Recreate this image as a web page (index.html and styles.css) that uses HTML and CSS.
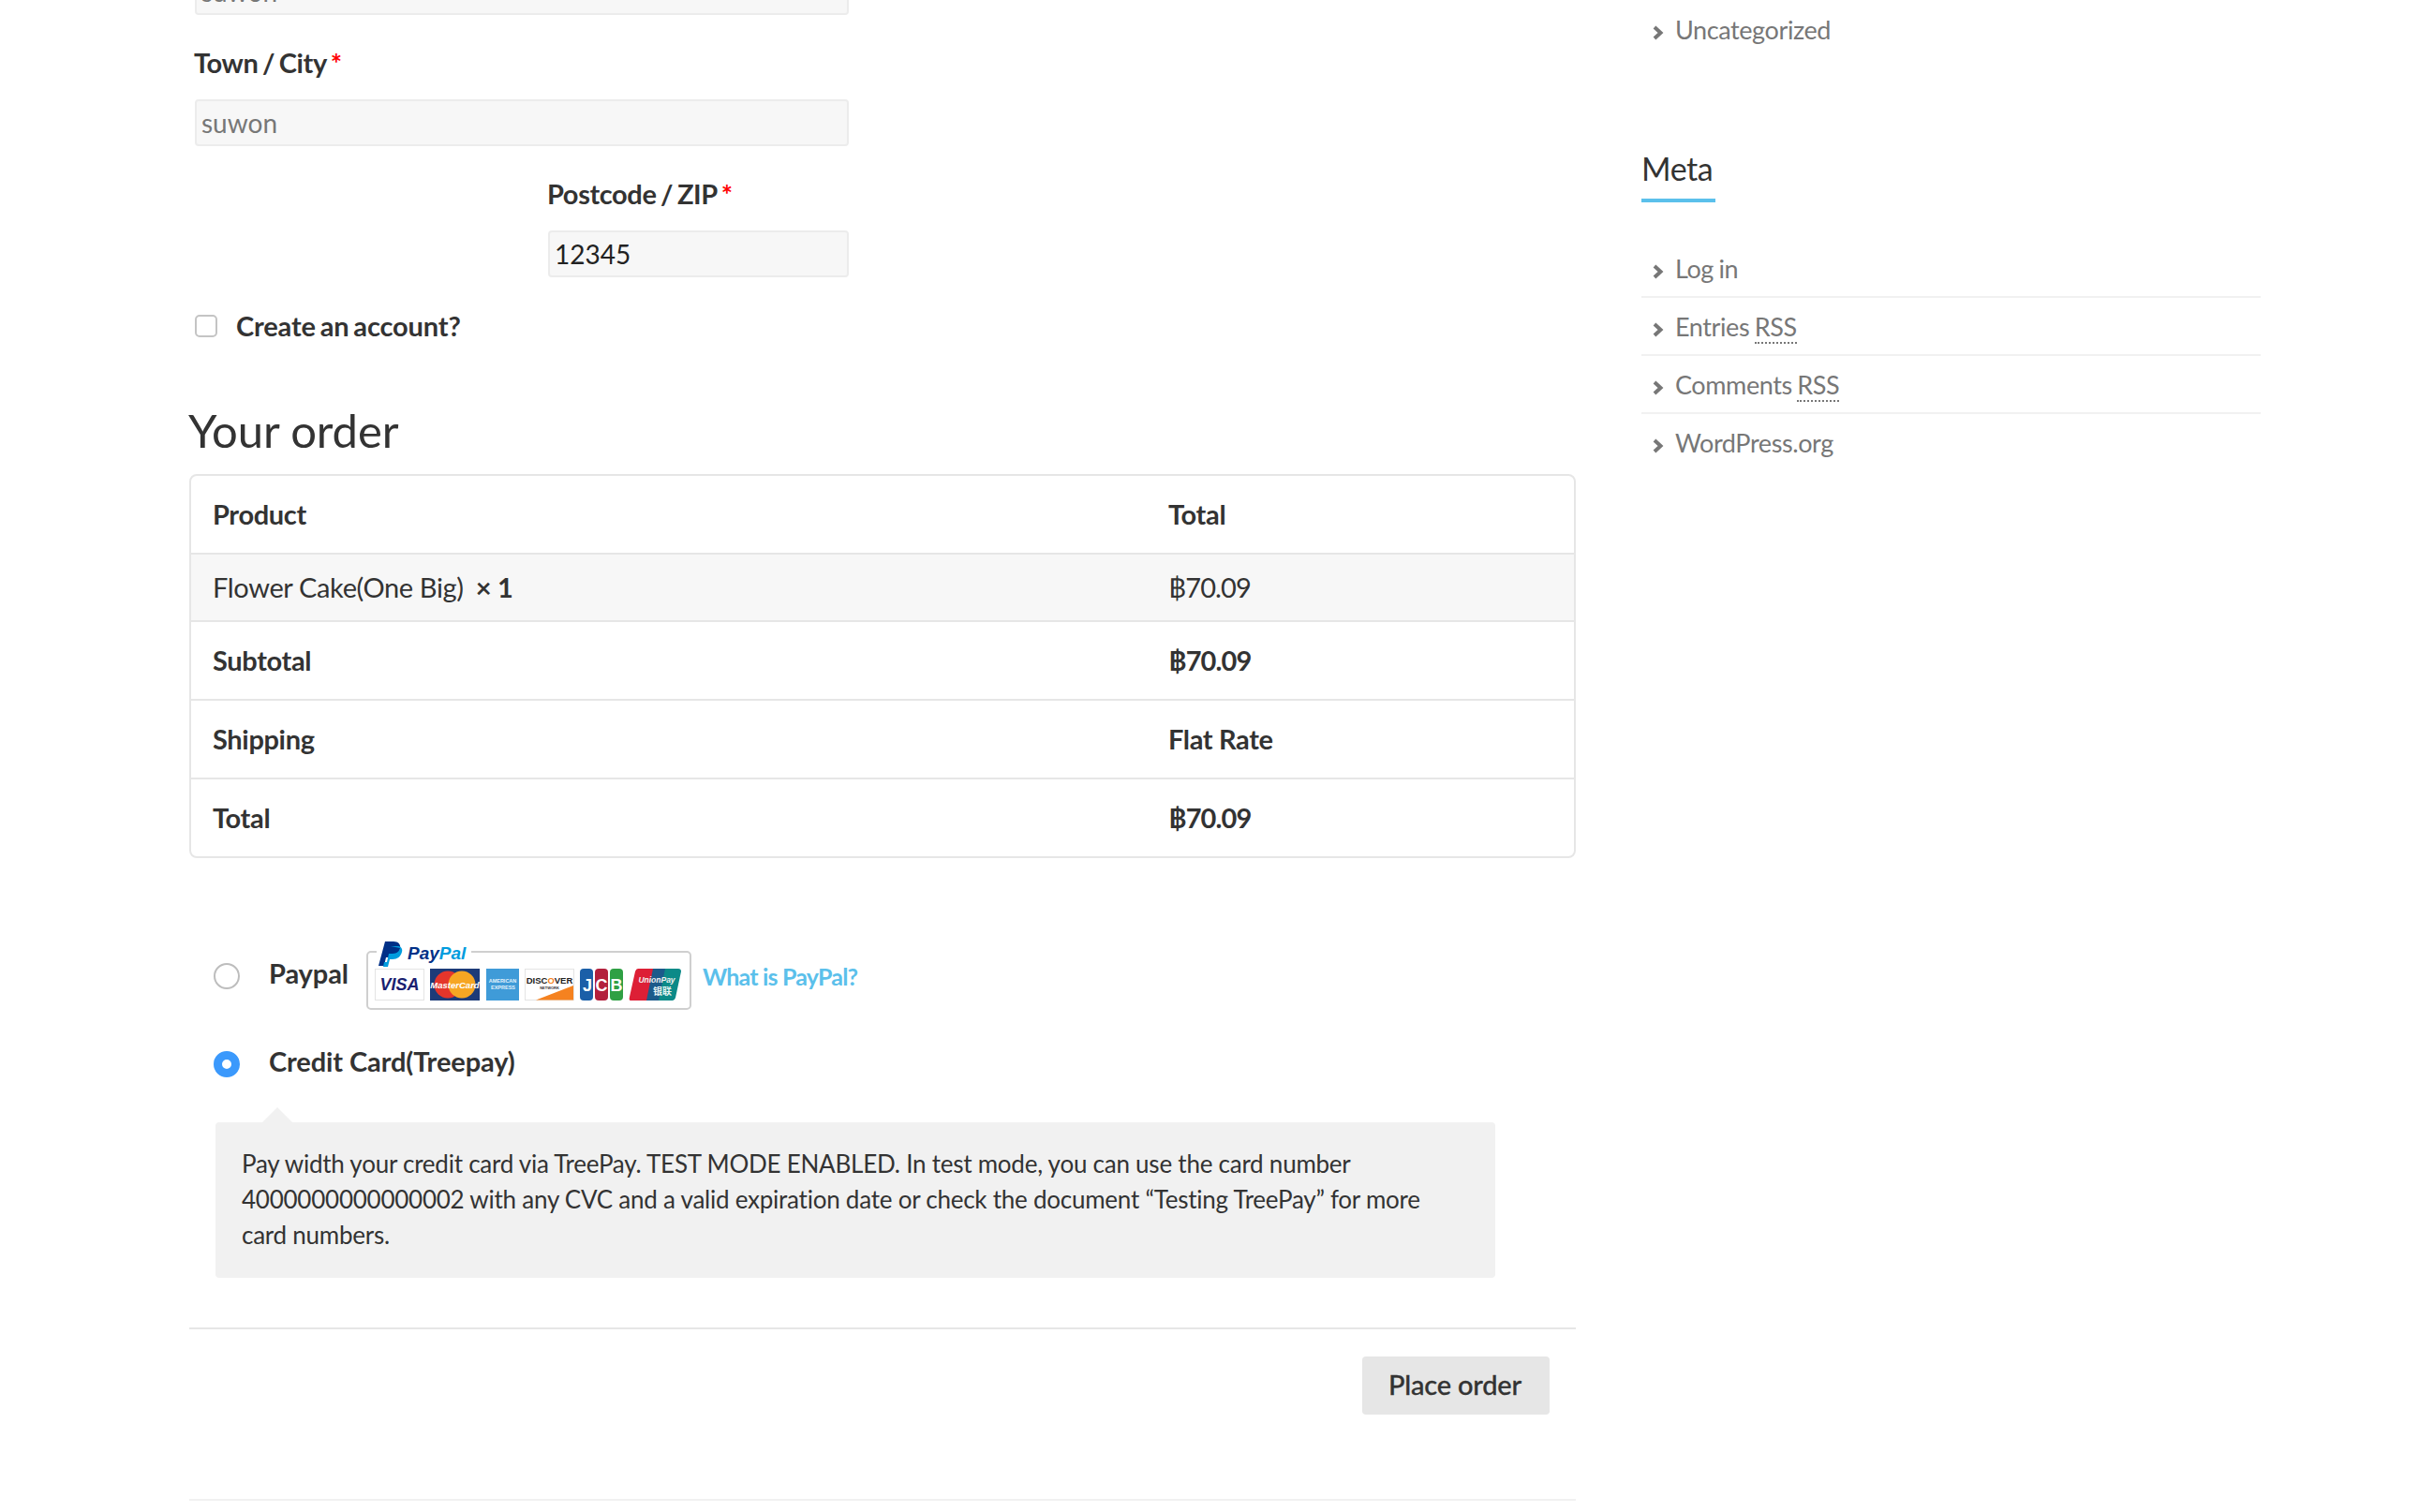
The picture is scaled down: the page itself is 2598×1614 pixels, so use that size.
FILE: index.html
```html
<!DOCTYPE html>
<html lang="en">
<head>
<meta charset="utf-8">
<title>Checkout</title>
<link rel="stylesheet" href="styles.css">
</head>
<body>
<div class="page">
  <main class="main">
    <div class="fields">
      <input class="input muted" type="text" value="suwon">
      <div class="field">
        <label class="label">Town / City <span class="req">*</span></label>
        <input class="input muted" type="text" value="suwon">
      </div>
      <div class="field field-half">
        <label class="label">Postcode / ZIP <span class="req">*</span></label>
        <input class="input" type="text" value="12345">
      </div>
      <label class="account"><input class="check" type="checkbox"><span>Create an account?</span></label>
    </div>

    <h2 class="order-title">Your order</h2>
    <table class="order">
      <thead>
        <tr><th class="col-a">Product</th><th>Total</th></tr>
      </thead>
      <tbody>
        <tr class="item"><td>Flower Cake(One Big) <strong class="qty">× 1</strong></td><td class="price">฿70.09</td></tr>
      </tbody>
      <tfoot>
        <tr><th>Subtotal</th><th class="price">฿70.09</th></tr>
        <tr><th>Shipping</th><th>Flat Rate</th></tr>
        <tr><th>Total</th><th class="price">฿70.09</th></tr>
      </tfoot>
    </table>

    <div class="pay-row pay-row-paypal">
      <input class="radio" type="radio" name="pay">
      <label class="pay-label">Paypal</label>
      <svg class="badge" width="348" height="74" viewBox="0 0 348 74">
        <path d="M112 11H342a4 4 0 0 1 4 4V68a4 4 0 0 1-4 4H5a4 4 0 0 1-4-4V15a4 4 0 0 1 4-4H11" fill="none" stroke="#cfcfcf" stroke-width="2"/>
        <path d="M20 0h9c6 0 8 4 7 8-1 6-6 9-11 9h-4l-2 9h-6z" fill="#003087"/>
        <path d="M26 5h7c4 0 6 3 5 6-1 5-5 8-10 8h-3l-2 8h-5l1-5h3l2-9h4c4 0 7-2 8-6z" fill="#009cde"/>
        <text class="pp" x="44" y="19"><tspan fill="#003087">Pay</tspan><tspan fill="#009cde">Pal</tspan></text>

        <rect x="9.5" y="29.5" width="52" height="33" fill="#fff" stroke="#e4e4e4"/>
        <text class="visa" x="35.5" y="52" text-anchor="middle">VISA</text>

        <rect x="68" y="29" width="53" height="34" fill="#1d3b78"/>
        <circle cx="87" cy="46" r="14.5" fill="#e4352b"/>
        <circle cx="102" cy="46" r="14.5" fill="#f6a623"/>
        <text class="mc" x="94.5" y="49.5" text-anchor="middle">MasterCard</text>

        <rect x="128" y="29" width="35" height="34" fill="#3f9bd8"/>
        <text class="amex" x="145.5" y="44" text-anchor="middle">AMERICAN</text>
        <text class="amex" x="146" y="51" text-anchor="middle">EXPRESS</text>

        <rect x="169.5" y="29.5" width="52" height="33" fill="#fff" stroke="#e4e4e4"/>
        <path d="M181 62.5L221 47V62.5Z" fill="#f58220"/>
        <text class="disc" x="195.5" y="45" text-anchor="middle">DISC<tspan fill="#f58220">O</tspan>VER</text>
        <text class="net" x="195.5" y="50.5" text-anchor="middle">NETWORK</text>

        <rect x="228" y="29" width="14" height="34" rx="4" fill="#1b5fa8"/>
        <rect x="244" y="29" width="14" height="34" rx="4" fill="#b3203c"/>
        <rect x="260" y="29" width="14" height="34" rx="4" fill="#2fa044"/>
        <text class="jcb" x="236" y="53" text-anchor="middle">J</text>
        <text class="jcb" x="251" y="53" text-anchor="middle">C</text>
        <text class="jcb" x="267" y="53" text-anchor="middle">B</text>

        <path d="M290 29h18l-7 34h-19q-2 0-1-4l6-27q1-3 3-3z" fill="#dd1f36"/>
        <path d="M306 29h16l-7 34h-16z" fill="#1c5a8a"/>
        <path d="M319 29h14q3 0 3 3l-6 28q-1 3-3 3h-15z" fill="#0c8a88"/>
        <text class="up" x="310" y="44" text-anchor="middle">UnionPay</text>
        <text class="upz" x="316" y="57" text-anchor="middle">银联</text>
      </svg>
      <a class="what" href="#">What is PayPal?</a>
    </div>

    <div class="pay-row pay-row-card">
      <input class="radio" type="radio" name="pay" checked>
      <label class="pay-label">Credit Card(Treepay)</label>
    </div>

    <div class="pay-box">Pay width your credit card via TreePay. TEST MODE ENABLED. In test mode, you can use the card number<br>4000000000000002 with any CVC and a valid expiration date or check the document “Testing TreePay” for more<br>card numbers.</div>

    <div class="place">
      <button class="place-btn" type="button">Place order</button>
    </div>
  </main>

  <aside class="side">
    <ul class="list list-first">
      <li><svg class="chev" width="14" height="18" viewBox="0 0 14 18"><path d="M3 3L9.5 9L3 15"/></svg><a href="#">Uncategorized</a></li>
    </ul>
    <h3 class="side-title"><span>Meta</span></h3>
    <ul class="list">
      <li><svg class="chev" width="14" height="18" viewBox="0 0 14 18"><path d="M3 3L9.5 9L3 15"/></svg><a href="#">Log in</a></li>
      <li><svg class="chev" width="14" height="18" viewBox="0 0 14 18"><path d="M3 3L9.5 9L3 15"/></svg><a href="#">Entries <abbr>RSS</abbr></a></li>
      <li><svg class="chev" width="14" height="18" viewBox="0 0 14 18"><path d="M3 3L9.5 9L3 15"/></svg><a href="#">Comments <abbr>RSS</abbr></a></li>
      <li><svg class="chev" width="14" height="18" viewBox="0 0 14 18"><path d="M3 3L9.5 9L3 15"/></svg><a href="#">WordPress.org</a></li>
    </ul>
  </aside>
</div>
</body>
</html>
```

FILE: styles.css
```css
html, body { margin: 0; padding: 0; height: 1614px; overflow: hidden; background: #fff; }
body { font-family: Lato, "Noto Sans", sans-serif; font-size: 29px; color: #333; }

.page {
  display: grid;
  grid-template-columns: 1480px 661px;
  column-gap: 70px;
  padding-left: 202px;
  align-items: start;
}

.main { margin-top: -34px; }

.fields { padding-left: 6px; width: 698px; }
.field { margin-top: 31px; }
.field-half { margin-left: 377px; }
.label { display: block; font-weight: 700; line-height: 40px; margin: 0 0 19px -1px; letter-spacing: -0.4px; word-spacing: -2px; }
.req { color: #f00; }

.input {
  display: block;
  box-sizing: border-box;
  width: 100%;
  height: 50px;
  padding: 0 5px;
  border: 2px solid #ececec;
  border-radius: 4px;
  background: #f7f7f7;
  font: 28px Lato, sans-serif;
  color: #222;
  outline: none;
}
.muted { color: #777; }

.account { display: flex; align-items: center; gap: 20px; height: 40px; margin-top: 31px; font-weight: 700; letter-spacing: -0.15px; word-spacing: -2px; }
.check {
  appearance: none;
  box-sizing: border-box;
  width: 24px;
  height: 24px;
  margin: 2px 0 0;
  background: #fff;
  border: 2px solid #c4c4c4;
  border-radius: 5px;
}

.order-title { margin: 62px 0 17px -1px; font-size: 49px; line-height: 60px; font-weight: 400; letter-spacing: -0.1px; color: #333; }

.order {
  width: 1480px;
  box-sizing: border-box;
  table-layout: fixed;
  border-collapse: separate;
  border-spacing: 0;
  border: 2px solid #e6e6e6;
  border-radius: 8px;
}
.order th, .order td { padding: 0 23px 2px; text-align: left; letter-spacing: -0.35px; }
.order th { font-weight: 700; }
.order td { font-weight: 400; }
.order th.col-a { width: 974px; }
.order thead th { height: 80px; }
.order tbody td { height: 68px; background: #f7f7f7; border-top: 2px solid #e6e6e6; }
.order tfoot th { height: 80px; border-top: 2px solid #e6e6e6; }
.order .price { letter-spacing: -0.9px; }
.qty { margin-left: 6px; }

.pay-row { display: flex; align-items: center; padding-left: 26px; }
.pay-row-paypal { height: 80px; margin-top: 86px; }
.pay-row-card { height: 40px; margin-top: 34px; }
.radio {
  appearance: none;
  box-sizing: border-box;
  flex: none;
  width: 28px;
  height: 28px;
  margin: 0 31px 0 0;
  background: #fff;
  border: 2px solid #bdbdbd;
  border-radius: 50%;
}
.radio:checked { background: #fff; border: 9px solid #3b99fc; }
.pay-label { font-weight: 700; margin-bottom: 8px; letter-spacing: -0.1px; }
.badge { flex: none; margin-left: 19px; }
.what { margin-left: 11px; font-size: 25px; font-weight: 700; color: #5bc0eb; text-decoration: none; letter-spacing: -0.8px; }

.pp { font: italic 700 19px "Liberation Sans", sans-serif; }
.visa { font: italic 900 18px "Liberation Sans", sans-serif; fill: #1a1f71; }
.mc { font: italic 700 9.5px "Liberation Sans", sans-serif; fill: #fff; }
.amex { font: 700 5.5px "Liberation Sans", sans-serif; fill: #e4f2fb; }
.disc { font: 700 9.5px "Liberation Sans", sans-serif; fill: #222; }
.net { font: 700 4px "Liberation Sans", sans-serif; fill: #333; }
.jcb { font: 700 18px "Liberation Sans", sans-serif; fill: #fff; }
.up { font: italic 700 8.5px "Liberation Sans", sans-serif; fill: #f1f1f1; }
.upz { font: 700 10px "Noto Sans CJK SC", sans-serif; fill: #e8f4f4; }

.pay-box {
  position: relative;
  box-sizing: border-box;
  width: 1366px;
  height: 166px;
  margin: 42px 0 0 28px;
  padding: 25px 28px 0;
  background: #f1f1f1;
  border-radius: 4px;
  font-size: 26px;
  line-height: 38px;
  color: #333;
  letter-spacing: -0.24px;
  white-space: nowrap;
}
.pay-box::before {
  content: "";
  position: absolute;
  left: 50px;
  top: -16px;
  border-left: 16px solid transparent;
  border-right: 16px solid transparent;
  border-bottom: 16px solid #f1f1f1;
}

.place {
  display: flex;
  justify-content: flex-end;
  margin-top: 53px;
  padding: 29px 28px 90px 0;
  border-top: 2px solid #e6e6e6;
  border-bottom: 2px solid #f1f1f1;
}
.place-btn {
  box-sizing: border-box;
  width: 200px;
  height: 62px;
  padding: 0 2px 3px 0;
  border: 0;
  border-radius: 4px;
  background: #e6e6e6;
  font: 500 29px Lato, sans-serif;
  -webkit-text-stroke: 0.3px #333;
  color: #333;
  letter-spacing: -0.2px;
}

.side { padding-top: 1px; }
.side-title { margin: 97px 0 40px; font-size: 34px; line-height: 44px; font-weight: 400; color: #333; letter-spacing: -0.4px; }
.side-title span { display: inline-block; padding: 0 3px 10px 0; border-bottom: 4px solid #5bc0eb; }

.list { list-style: none; margin: 0; padding: 0; font-size: 27px; }
.list li { display: flex; align-items: center; height: 60px; padding-left: 11px; border-bottom: 2px solid #f1f1f1; }
.list li:last-child { border-bottom: 0; }
.list a { color: #777; text-decoration: none; letter-spacing: -0.4px; word-spacing: -1px; }
.list abbr { border-bottom: 2px dotted #777; }
.chev { flex: none; margin: 8px 11px 0 0; fill: none; stroke: #777; stroke-width: 4px; }
```
